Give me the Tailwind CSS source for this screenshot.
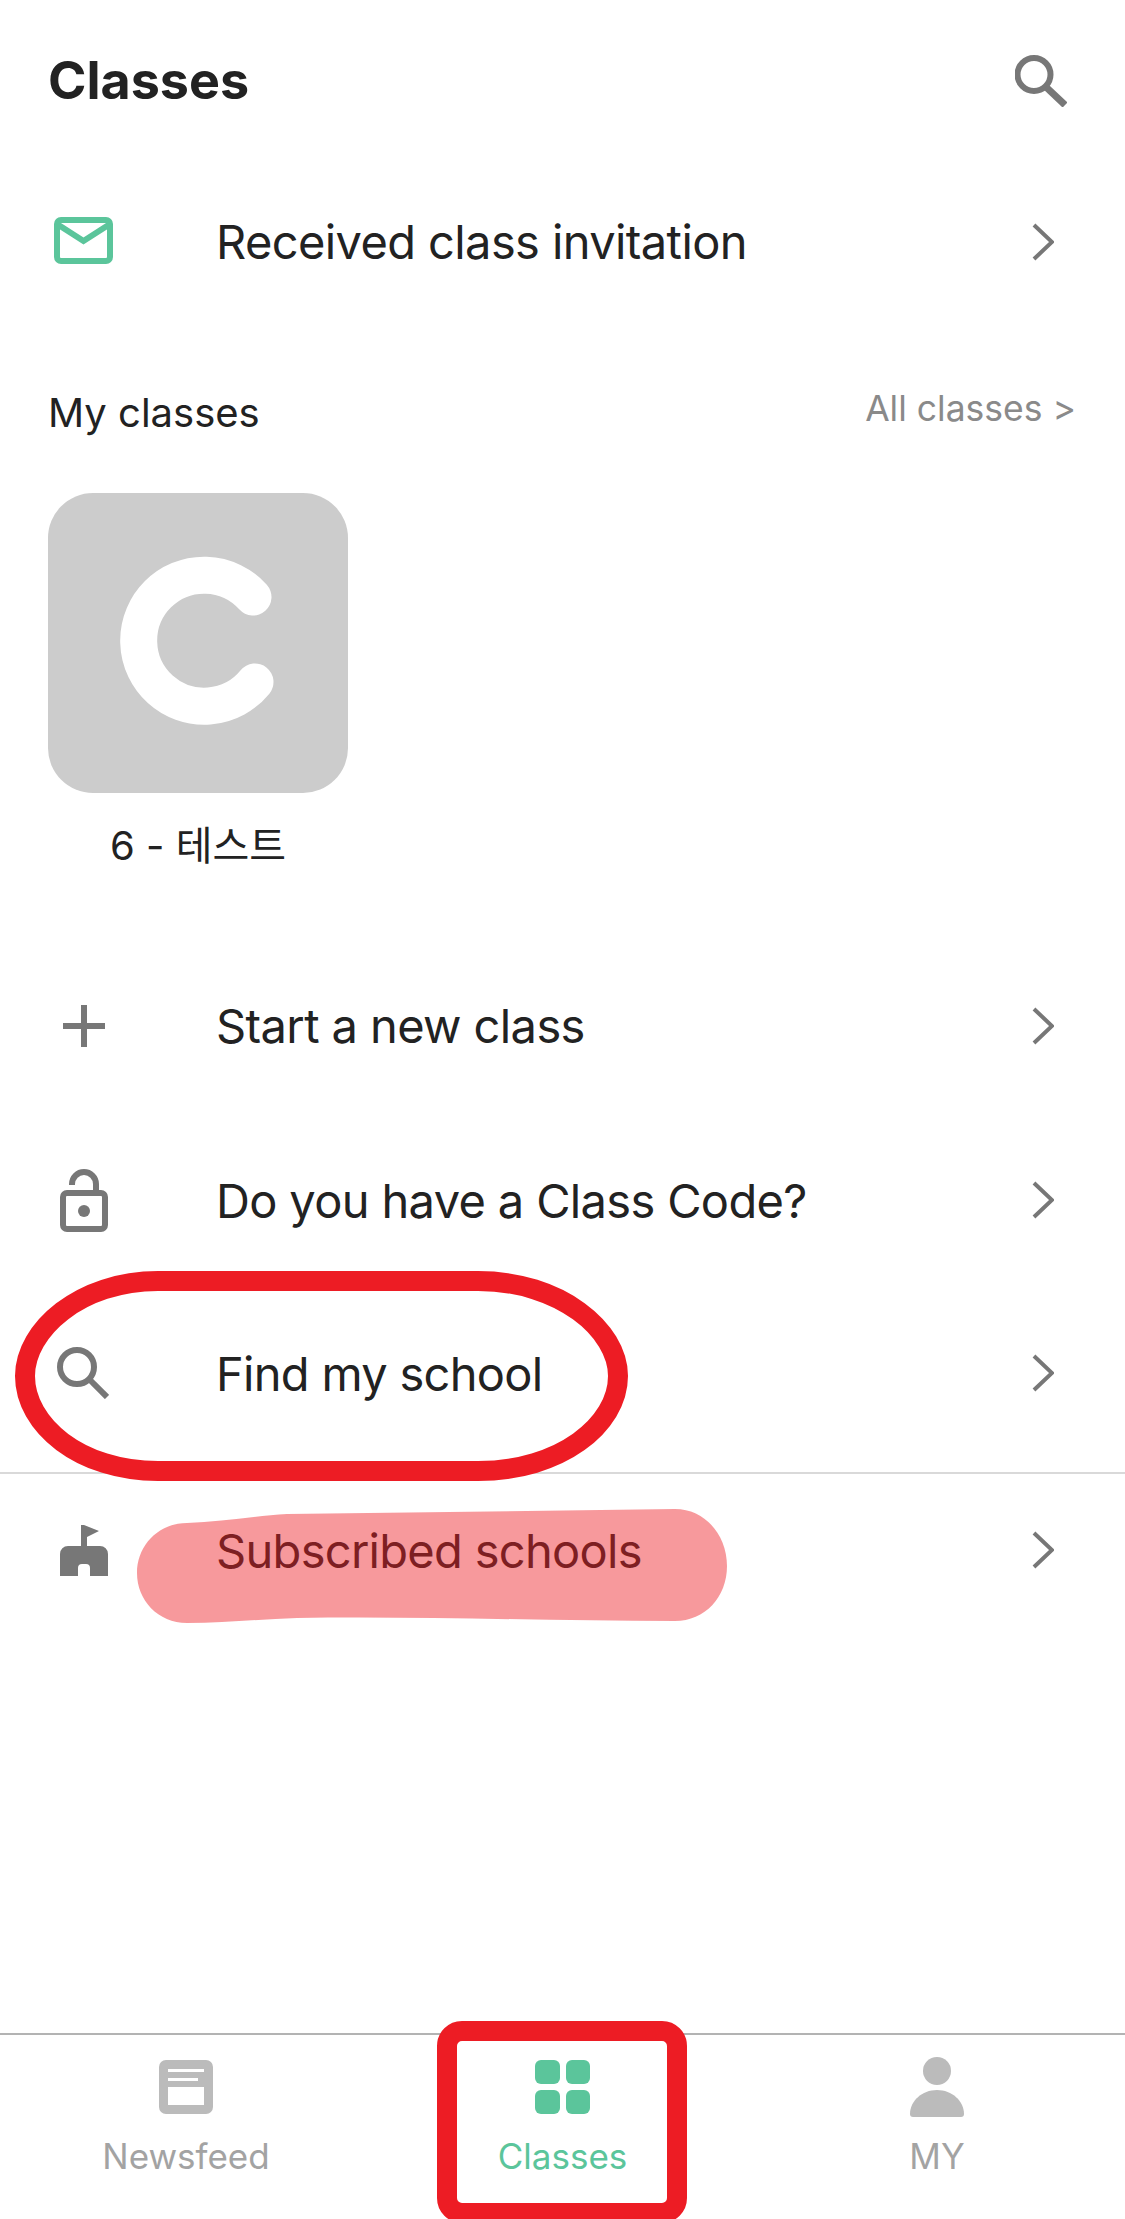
<!DOCTYPE html>
<html lang="en">
<head>
  <meta charset="UTF-8" />
  <title>Classes</title>
  <script src="https://cdn.jsdelivr.net/npm/@tailwindcss/browser@4"></script>
</head>
<body class="bg-white text-[#222222] font-['Inter','Noto_Sans_CJK_KR',sans-serif]">
  <div class="relative w-[1125px] h-[2219px] overflow-hidden flex flex-col">

    <!-- HEADER -->
    <header class="h-[162px] shrink-0 flex items-center justify-between pl-[48px] pr-[58px]">
      <h1 class="text-[52px] font-bold leading-none">Classes</h1>
      <svg class="w-[52px] h-[52px]" viewBox="0 0 52 52" fill="none" stroke="#777777"><circle cx="19" cy="19.5" r="16.5" stroke-width="6"/><path d="M31 32 50 50" stroke-width="7"/></svg>
    </header>

    <!-- INVITATION -->
    <a class="h-[160px] shrink-0 flex items-center pl-[54px] pr-[71px]">
      <span class="w-[162px] shrink-0 -mt-[3px]">
        <svg class="w-[59px] h-[47px]" viewBox="0 0 59 47" fill="none"><rect x="3" y="3" width="53" height="41" rx="4" stroke="#5bc59b" stroke-width="6"/><path d="M3 7 29.5 24 56 7" stroke="#5bc59b" stroke-width="6"/></svg>
      </span>
      <span class="flex-1 text-[47px] tracking-[-0.6px] leading-none -mt-[2px]">Received class invitation</span>
      <svg class="w-[22px] h-[38px]" viewBox="0 0 22 38" fill="none"><path d="M2 2 20 19 2 36" stroke="#777777" stroke-width="4"/></svg>
    </a>

    <!-- MY CLASSES -->
    <div class="mt-[61px] h-[60px] shrink-0 flex items-center justify-between pl-[48px] pr-[49px]">
      <span class="text-[40px] leading-none">My classes</span>
      <span class="text-[35.5px] leading-none text-[#8a8a8a] -mt-[8px]">All classes &gt;</span>
    </div>
    <div class="mt-[50px] ml-[48px] w-[300px] shrink-0">
      <div class="w-[300px] h-[300px] rounded-[45px] bg-[#cccccc] flex items-center justify-center">
        <svg class="w-[300px] h-[300px]" viewBox="0 0 300 300" fill="none"><path d="M205 104A65.5 65.5 0 1 0 207 189" stroke="#ffffff" stroke-width="37" stroke-linecap="round"/></svg>
      </div>
      <p class="mt-[23px] h-[60px] flex items-center justify-center text-[40px] leading-none">6 - 테스트</p>
    </div>

    <!-- ACTIONS -->
    <a class="mt-[62px] h-[175px] shrink-0 flex items-center pl-[54px] pr-[71px]">
      <span class="w-[162px] shrink-0 pl-[9px]">
        <svg class="w-[42px] h-[42px]" viewBox="0 0 42 42" fill="none"><path d="M21 0V42M0 21H42" stroke="#777777" stroke-width="6"/></svg>
      </span>
      <span class="flex-1 text-[47px] tracking-[-0.6px] leading-none">Start a new class</span>
      <svg class="w-[22px] h-[38px]" viewBox="0 0 22 38" fill="none"><path d="M2 2 20 19 2 36" stroke="#777777" stroke-width="4"/></svg>
    </a>
    <a class="h-[174px] shrink-0 flex items-center pl-[54px] pr-[71px]">
      <span class="w-[162px] shrink-0 pl-[6px]">
        <svg class="w-[48px] h-[63px]" viewBox="0 0 48 63" fill="none"><rect x="3" y="24" width="42" height="36" rx="4" stroke="#777777" stroke-width="6"/><path d="M12 16V15A12 12 0 0 1 36 15V23" stroke="#777777" stroke-width="6"/><circle cx="24" cy="42" r="6" fill="#777777"/></svg>
      </span>
      <span class="flex-1 text-[47px] tracking-[-0.65px] leading-none">Do you have a Class Code?</span>
      <svg class="w-[22px] h-[38px]" viewBox="0 0 22 38" fill="none"><path d="M2 2 20 19 2 36" stroke="#777777" stroke-width="4"/></svg>
    </a>
    <a class="h-[172px] shrink-0 flex items-center pl-[54px] pr-[71px]">
      <span class="w-[162px] shrink-0 pl-[3px]">
        <svg class="w-[52px] h-[52px]" viewBox="0 0 52 52" fill="none" stroke="#777777"><circle cx="20" cy="20" r="17" stroke-width="6"/><path d="M32 32 50 50" stroke-width="6"/></svg>
      </span>
      <span class="flex-1 text-[47px] tracking-[-0.7px] leading-none">Find my school</span>
      <svg class="w-[22px] h-[38px]" viewBox="0 0 22 38" fill="none"><path d="M2 2 20 19 2 36" stroke="#777777" stroke-width="4"/></svg>
    </a>
    <div class="mt-[13px] h-[2px] shrink-0 bg-[#d9d9d9]"></div>
    <a class="h-[152px] shrink-0 flex items-center pl-[54px] pr-[71px]">
      <span class="w-[162px] shrink-0 pl-[6px]">
        <svg class="w-[48px] h-[51px]" viewBox="0 0 48 51" fill="#777777"><path d="M21 0H24L39 6 27 12V21H40A8 8 0 0 1 48 29V51H30V43A4 4 0 0 0 26 39H22A4 4 0 0 0 18 43V51H0V29A8 8 0 0 1 8 21H21Z"/></svg>
      </span>
      <span class="flex-1 text-[47px] tracking-[-0.7px] leading-none">Subscribed schools</span>
      <svg class="w-[22px] h-[38px]" viewBox="0 0 22 38" fill="none"><path d="M2 2 20 19 2 36" stroke="#777777" stroke-width="4"/></svg>
    </a>

    <!-- BOTTOM NAV -->
    <nav class="mt-auto h-[186px] shrink-0 border-t-2 border-[#b3b3b3] grid grid-cols-[372px_381px_368px]">
      <div class="flex flex-col items-center">
        <svg class="mt-[25px] w-[54px] h-[54px]" viewBox="0 0 54 54" fill="#bbbbbb"><path fill-rule="evenodd" d="M7 0H47A7 7 0 0 1 54 7V47A7 7 0 0 1 47 54H7A7 7 0 0 1 0 47V7A7 7 0 0 1 7 0ZM9 9V12H45V9ZM9 18V21H39V18ZM9 27V45H45V27Z"/></svg>
        <span class="mt-[25px] text-[35px] leading-none text-[#a3a3a3]">Newsfeed</span>
      </div>
      <div class="flex flex-col items-center">
        <div class="mt-[25px] w-[55px] h-[54px] grid grid-cols-2 gap-[6px]">
          <span class="rounded-[6px] bg-[#5bc59b]"></span>
          <span class="rounded-[6px] bg-[#5bc59b]"></span>
          <span class="rounded-[6px] bg-[#5bc59b]"></span>
          <span class="rounded-[6px] bg-[#5bc59b]"></span>
        </div>
        <span class="mt-[25px] text-[35px] leading-none text-[#5bc59b]">Classes</span>
      </div>
      <div class="flex flex-col items-center">
        <svg class="mt-[22px] w-[54px] h-[60px]" viewBox="0 0 54 60" fill="#bbbbbb"><circle cx="27" cy="14" r="14"/><path d="M3 60A3 3 0 0 1 0 57C0 44 12 33 27 33S54 44 54 57A3 3 0 0 1 51 60Z"/></svg>
        <span class="mt-[22px] text-[35px] leading-none text-[#a3a3a3]">MY</span>
      </div>
    </nav>

    <!-- ANNOTATIONS drawn over the screenshot -->
    <svg class="absolute inset-0 w-[1125px] h-[2219px] pointer-events-none" viewBox="0 0 1125 2219" fill="none">
      <path d="M158 1281H478C560 1281 618 1330 618 1376C618 1425 560 1471 478 1471H158C80 1471 25 1425 25 1376C25 1330 80 1281 158 1281Z" stroke="#ed1c24" stroke-width="20"/>
      <path d="M187 1523C220 1522 255 1516 287 1514L675 1509C705 1509 727 1535 727 1566C727 1597 705 1621 675 1621C550 1621 420 1616 297 1618C260 1619 225 1623 187 1623C158 1623 137 1600 137 1573C137 1546 158 1523 187 1523Z" fill="#ed1c24" fill-opacity="0.45"/>
      <rect x="447" y="2031" width="230" height="182" rx="15" stroke="#ed1c24" stroke-width="20"/>
    </svg>
  </div>
</body>
</html>
